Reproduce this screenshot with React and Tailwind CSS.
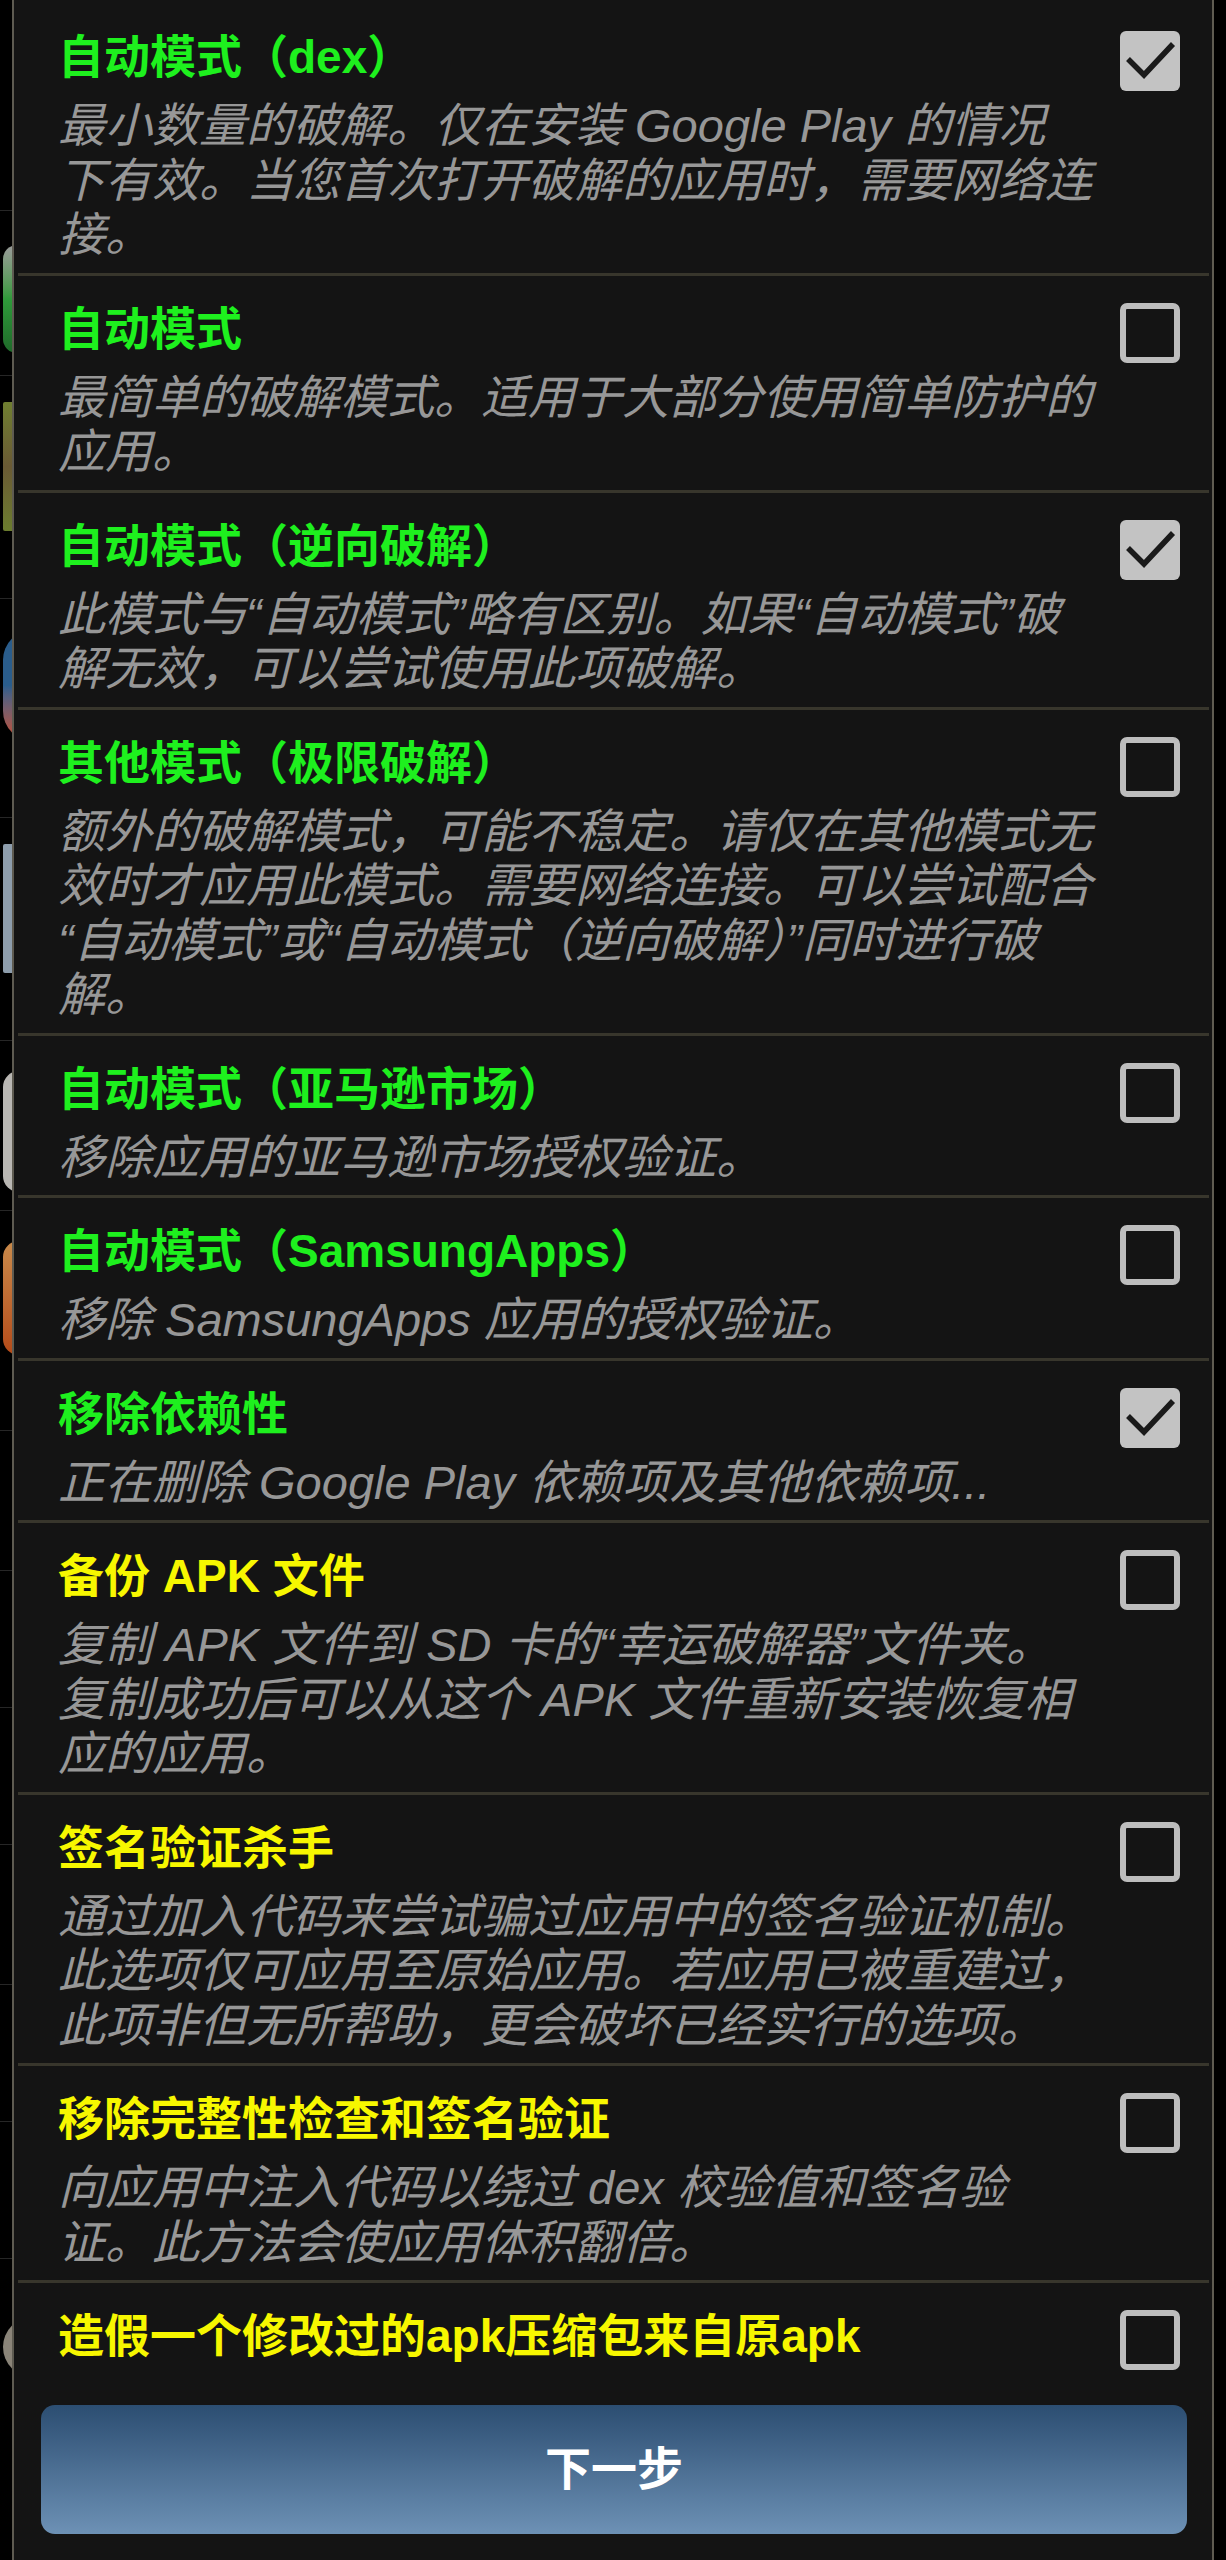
const GREEN = "text-[#1ef01e]";
const YELLOW = "text-[#f7f700]";

const options = [
  {
    title: "自动模式（dex）",
    color: GREEN,
    checked: true,
    lines: [
      "最小数量的破解。仅在安装 Google Play 的情况",
      "下有效。当您首次打开破解的应用时，需要网络连",
      "接。",
    ],
  },
  {
    title: "自动模式",
    color: GREEN,
    checked: false,
    lines: ["最简单的破解模式。适用于大部分使用简单防护的", "应用。"],
  },
  {
    title: "自动模式（逆向破解）",
    color: GREEN,
    checked: true,
    lines: [
      "此模式与“自动模式”略有区别。如果“自动模式”破",
      "解无效，可以尝试使用此项破解。",
    ],
  },
  {
    title: "其他模式（极限破解）",
    color: GREEN,
    checked: false,
    lines: [
      "额外的破解模式，可能不稳定。请仅在其他模式无",
      "效时才应用此模式。需要网络连接。可以尝试配合",
      "“自动模式”或“自动模式（逆向破解）”同时进行破",
      "解。",
    ],
  },
  {
    title: "自动模式（亚马逊市场）",
    color: GREEN,
    checked: false,
    lines: ["移除应用的亚马逊市场授权验证。"],
  },
  {
    title: "自动模式（SamsungApps）",
    color: GREEN,
    checked: false,
    lines: ["移除 SamsungApps 应用的授权验证。"],
  },
  {
    title: "移除依赖性",
    color: GREEN,
    checked: true,
    lines: ["正在删除 Google Play 依赖项及其他依赖项..."],
  },
  {
    title: "备份 APK 文件",
    color: YELLOW,
    checked: false,
    lines: [
      "复制 APK 文件到 SD 卡的“幸运破解器”文件夹。",
      "复制成功后可以从这个 APK 文件重新安装恢复相",
      "应的应用。",
    ],
  },
  {
    title: "签名验证杀手",
    color: YELLOW,
    checked: false,
    lines: [
      "通过加入代码来尝试骗过应用中的签名验证机制。",
      "此选项仅可应用至原始应用。若应用已被重建过，",
      "此项非但无所帮助，更会破坏已经实行的选项。",
    ],
  },
  {
    title: "移除完整性检查和签名验证",
    color: YELLOW,
    checked: false,
    lines: ["向应用中注入代码以绕过 dex 校验值和签名验", "证。此方法会使应用体积翻倍。"],
  },
];

const FONT = "font-['Liberation_Sans','Noto_Sans_CJK_SC',sans-serif]";

function CheckBox({ checked }) {
  if (checked) {
    return (
      <div className="h-[60px] w-[60px] shrink-0 rounded-[6px] bg-[#c3c3c3]">
        <svg viewBox="0 0 60 60" className="h-full w-full">
          <path d="M8 28 L24 44 L53 13" fill="none" stroke="#1a1a1a" strokeWidth="5.5" />
        </svg>
      </div>
    );
  }
  return <div className="h-[60px] w-[60px] shrink-0 rounded-[7px] border-[6px] border-[#bdbdbd]" />;
}

function OptionRow({ option, first }) {
  return (
    <div
      className={
        first
          ? "flex pb-[10px] pl-[40px] pr-[29px] pt-[29px]"
          : "flex border-t-[3px] border-[#38362c] pb-[10px] pl-[40px] pr-[29px] pt-[25px]"
      }
    >
      <div className="min-w-0 flex-1">
        <div className={`text-[46px] font-bold leading-[56px] whitespace-nowrap ${option.color}`}>
          {option.title}
        </div>
        <div className="mt-[14px] text-[47px] italic leading-[54.5px] text-[#979797]">
          {option.lines.map((line, i) => (
            <div key={i} className="whitespace-nowrap">
              {line}
            </div>
          ))}
        </div>
      </div>
      <div className="mt-[2px]">
        <CheckBox checked={option.checked} />
      </div>
    </div>
  );
}

// pieces of the launcher that show behind the dialog on the left
function BackdropStrip() {
  const lines = [210, 375, 598, 817, 1040, 1210, 1430, 1570, 1707, 1844, 1984, 2121, 2258];
  return (
    <div className="relative w-[12px] shrink-0 overflow-hidden bg-black">
      {lines.map((y) => (
        <div key={y} className="absolute left-0 h-px w-full bg-[#262626]" style={{ top: y }} />
      ))}
      <div className="absolute left-[3px] top-[245px] h-[108px] w-[30px] rounded-l-[14px] bg-gradient-to-b from-[#9a9a9a] via-[#2f9a3a] to-[#1f6a2a]" />
      <div className="absolute left-[3px] top-[402px] h-[129px] w-[30px] rounded-l-[2px] bg-gradient-to-b from-[#6f7f30] via-[#6a5a34] to-[#6b7d2e]" />
      <div className="absolute left-[3px] top-[630px] h-[111px] w-[30px] rounded-l-full bg-gradient-to-b from-[#2a5d8c] via-[#2a5d8c] to-[#c4482a]" />
      <div className="absolute left-[3px] top-[844px] h-[129px] w-[30px] rounded-l-[2px] bg-[#8d9dac]" />
      <div className="absolute left-[3px] top-[1071px] h-[121px] w-[30px] rounded-l-[16px] bg-[#b9b7b3]" />
      <div className="absolute left-[3px] top-[1241px] h-[114px] w-[30px] rounded-l-[16px] bg-gradient-to-b from-[#c98a4a] to-[#b44a18]" />
      <div className="absolute left-[3px] top-[2317px] h-[60px] w-[30px] rounded-l-full bg-[#8a8478]" />
    </div>
  );
}

export default function App() {
  return (
    <div className={`flex h-[2560px] w-full overflow-hidden bg-black ${FONT}`}>
      <BackdropStrip />
      <div className="flex w-[1202px] shrink-0 flex-col border-x-2 border-[#5e5b51] bg-[#141414]">
        <div className="mx-[4px] mr-[3px] flex flex-col">
          {options.map((option, i) => (
            <OptionRow key={i} option={option} first={i === 0} />
          ))}
          <div className="flex border-t-[3px] border-[#38362c] pl-[40px] pr-[29px] pt-[25px]">
            <div className={`flex-1 whitespace-nowrap text-[46px] font-bold leading-[56px] ${YELLOW}`}>
              造假一个修改过的apk压缩包来自原apk
            </div>
            <div className="mt-[2px]">
              <CheckBox checked={false} />
            </div>
          </div>
        </div>
        <div className="ml-[27px] mr-[25px] mt-[35px] flex h-[129px] items-center justify-center rounded-[14px] bg-gradient-to-b from-[#2c4e72] to-[#6d91b5]">
          <span className="text-[46px] font-bold text-white">下一步</span>
        </div>
      </div>
      <div className="flex-1 bg-black" />
    </div>
  );
}
